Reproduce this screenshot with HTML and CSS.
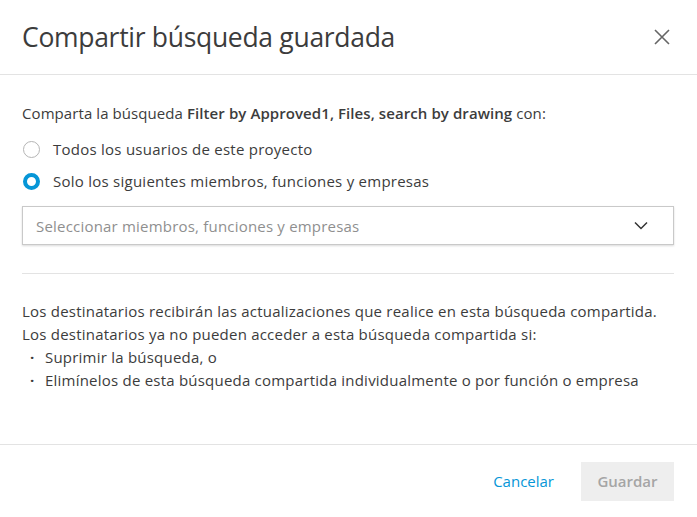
FILE: index.html
```html
<!DOCTYPE html>
<html lang="es">
<head>
<meta charset="utf-8">
<link rel="stylesheet" href="styles.css">
</head>
<body>
<div class="dialog">
  <header class="head">
    <h1 class="title">Compartir búsqueda guardada</h1>
    <button class="close" aria-label="Cerrar">
      <svg width="18" height="18" viewBox="0 0 18 18"><path d="M2 2L16 16M16 2L2 16" stroke="#666" stroke-width="1.6" fill="none"/></svg>
    </button>
  </header>
  <main class="body">
    <p class="intro">Comparta la búsqueda <b>Filter by Approved1, Files, search by drawing</b> con:</p>
    <label class="radio"><span class="dot"></span>Todos los usuarios de este proyecto</label>
    <label class="radio"><span class="dot on"></span>Solo los siguientes miembros, funciones y empresas</label>
    <div class="select">
      <span class="ph">Seleccionar miembros, funciones y empresas</span>
      <svg width="14" height="9" viewBox="0 0 14 9"><path d="M1 1.5L7 7.5L13 1.5" stroke="#333" stroke-width="1.5" fill="none"/></svg>
    </div>
    <hr class="rule">
    <div class="info">
      <p>Los destinatarios recibirán las actualizaciones que realice en esta búsqueda compartida.</p>
      <p>Los destinatarios ya no pueden acceder a esta búsqueda compartida si:</p>
      <ul>
        <li>Suprimir la búsqueda, o</li>
        <li>Elimínelos de esta búsqueda compartida individualmente o por función o empresa</li>
      </ul>
    </div>
  </main>
  <footer class="foot">
    <button class="cancel">Cancelar</button>
    <button class="save" disabled>Guardar</button>
  </footer>
</div>
</body>
</html>
```
FILE: styles.css
```css
* { box-sizing: border-box; }
html, body { margin: 0; padding: 0; background: #fff; }
body {
  font-family: "Open Sans", "Noto Sans", sans-serif;
  color: #3c3c3c;
  width: 697px;
  height: 517px;
  overflow: hidden;
}
.dialog { display: flex; flex-direction: column; height: 517px; }
.head {
  height: 75px;
  display: flex;
  align-items: center;
  justify-content: space-between;
  padding: 0 26px 0 22px;
  border-bottom: 1px solid #e3e3e3;
}
.title {
  margin: 0;
  font-weight: 400;
  font-size: 26.5px;
  letter-spacing: -0.3px;
  color: #3c3c3c;
}
.close { border: 0; background: none; padding: 0; display: flex; }
.body { padding: 28px 23px 0 22px; flex: 1; font-size: 15px; }
.intro { margin: 0 0 10px; line-height: 20px; letter-spacing: 0.08px; }
.intro b { font-weight: 600; }
.radio { display: flex; align-items: center; height: 32px; gap: 13px; padding-left: 1px; letter-spacing: 0.25px; }
.dot {
  width: 17px; height: 17px; border-radius: 50%;
  border: 1px solid #b5b5b5; background: #fff; flex: none;
}
.dot.on { border: 4px solid #0696d7; }
.select {
  margin-top: 9px;
  height: 39px;
  border: 1px solid #c9c9c9;
  box-shadow: 0 1px 2px rgba(0,0,0,0.15);
  display: flex; align-items: center; justify-content: space-between;
  padding: 0 25px 0 13px;
}
.ph { color: #8f8f8f; letter-spacing: 0.2px; }
.rule { border: 0; border-top: 1px solid #e3e3e3; margin: 28px 0 0; }
.info { margin-top: 26px; line-height: 23px; letter-spacing: 0.22px; }
.info p { margin: 0; }
.info ul { margin: 0; padding: 0; list-style: none; }
.info li { padding-left: 23px; position: relative; }
.info li::before { content: "·"; position: absolute; left: 8px; font-weight: 700; }
.foot {
  height: 73px;
  border-top: 1px solid #e3e3e3;
  display: flex; align-items: center; justify-content: flex-end;
  padding: 0 23px 0 0;
  gap: 27px;
}
.cancel {
  border: 0; background: none; font: inherit; font-size: 15px;
  color: #0696d7; padding: 0;
}
.save {
  border: 0; background: #eeeeee; color: #a5a5a5;
  font: inherit; font-size: 15px; font-weight: 600;
  width: 93px; height: 39px;
}
```
